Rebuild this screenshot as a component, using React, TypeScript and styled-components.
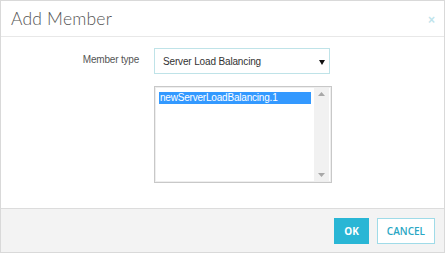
import React, { useState } from "react";
import styled, { createGlobalStyle } from "styled-components";

const GlobalStyle = createGlobalStyle`
  html, body {
    margin: 0;
    padding: 0;
    background: #ffffff;
  }
  * {
    box-sizing: border-box;
  }
`;

const Dialog = styled.div`
  width: 445px;
  height: 253px;
  border: 1px solid #d9d9d9;
  display: flex;
  flex-direction: column;
  background: #fff;
  font-family: Arial, "Liberation Sans", sans-serif;
`;

const Header = styled.div`
  height: 36px;
  border-bottom: 1px solid #e8e8e8;
  display: flex;
  align-items: center;
  justify-content: space-between;
  padding: 0 9px 0 10px;
`;

const Title = styled.h4`
  margin: 0;
  font-family: Lato, "Open Sans", sans-serif;
  font-weight: 300;
  font-size: 17.5px;
  color: #555;
  letter-spacing: 0.2px;
`;

const Close = styled.span`
  color: #bfe4ec;
  font-size: 12px;
  font-family: Arial, "Liberation Sans", sans-serif;
  font-weight: bold;
  margin-top: 2px;
`;

const Body = styled.div`
  flex: 1;
  padding: 11px 0 0 0;
`;

const Row = styled.div<{ $top?: number }>`
  display: grid;
  grid-template-columns: 138px 178px;
  column-gap: 15px;
  align-items: start;
  margin-top: ${(p) => p.$top ?? 0}px;
`;

const Label = styled.label`
  text-align: right;
  font-size: 10px;
  letter-spacing: -0.2px;
  color: #555;
  padding-top: 6px;
`;

const SelectBox = styled.div`
  width: 176px;
  height: 26px;
  border: 1px solid #bfe3e8;
  display: flex;
  align-items: center;
  justify-content: space-between;
  padding: 1px 4px 0 8px;
  font-size: 10px;
  letter-spacing: -0.15px;
  color: #333;
`;

const Arrow = styled.svg`
  width: 6px;
  height: 6px;
`;

const ListBox = styled.div`
  width: 178px;
  height: 97px;
  border: 1px solid #c8c8c8;
  box-shadow: inset 0 0 0 1px #eeeeee;
  display: flex;
  padding: 4px 2px 2px 4px;
`;

const Options = styled.div`
  flex: 1;
  padding-top: 1px;
`;

const Option = styled.div<{ $selected?: boolean }>`
  height: 12px;
  line-height: 12px;
  font-size: 10px;
  letter-spacing: -0.2px;
  padding-left: 1px;
  margin-right: 3px;
  color: ${(p) => (p.$selected ? "#fff" : "#333")};
  background: ${(p) => (p.$selected ? "#3399ff" : "transparent")};
`;

const Scrollbar = styled.div`
  width: 15px;
  background: #f1f1f1;
  display: flex;
  flex-direction: column;
  justify-content: space-between;
  align-items: center;
  padding: 4px 0;
  margin: -3px 0 -1px 0;
`;

const Footer = styled.div`
  height: 44px;
  border-top: 1px solid #dcdcdc;
  background: #f3f3f3;
  display: flex;
  align-items: center;
  justify-content: flex-end;
  gap: 8px;
  padding: 0 9px 0 0;
`;

const Button = styled.button<{ $primary?: boolean }>`
  height: 26px;
  padding: 0 9px;
  font-family: "Open Sans", Arial, sans-serif;
  font-weight: ${(p) => (p.$primary ? 700 : 600)};
  font-size: 10px;
  border: 1px solid ${(p) => (p.$primary ? "#29b6d5" : "#9fdbe8")};
  background: ${(p) => (p.$primary ? "#29b6d5" : "#ffffff")};
  color: ${(p) => (p.$primary ? "#ffffff" : "#2aa7c4")};
  cursor: pointer;
`;

const Tri = ({ down }: { down?: boolean }) => (
  <svg width="7" height="4" viewBox="0 0 7 4">
    <path d={down ? "M0 0 L7 0 L3.5 4 Z" : "M0 4 L7 4 L3.5 0 Z"} fill="#a8a8a8" />
  </svg>
);

export default function App() {
  const [type] = useState("Server Load Balancing");
  const members = ["newServerLoadBalancing.1"];

  return (
    <>
      <GlobalStyle />
      <Dialog>
        <Header>
          <Title>Add Member</Title>
          <Close>×</Close>
        </Header>
        <Body>
          <Row>
            <Label>Member type</Label>
            <SelectBox>
              <span>{type}</span>
              <Arrow viewBox="0 0 6 6">
                <path d="M0 1 L6 1 L3 6 Z" fill="#111" />
              </Arrow>
            </SelectBox>
          </Row>
          <Row $top={12}>
            <span />
            <ListBox>
              <Options>
                {members.map((m, i) => (
                  <Option key={m} $selected={i === 0}>
                    {m}
                  </Option>
                ))}
              </Options>
              <Scrollbar>
                <Tri />
                <Tri down />
              </Scrollbar>
            </ListBox>
          </Row>
        </Body>
        <Footer>
          <Button $primary>OK</Button>
          <Button>CANCEL</Button>
        </Footer>
      </Dialog>
    </>
  );
}
